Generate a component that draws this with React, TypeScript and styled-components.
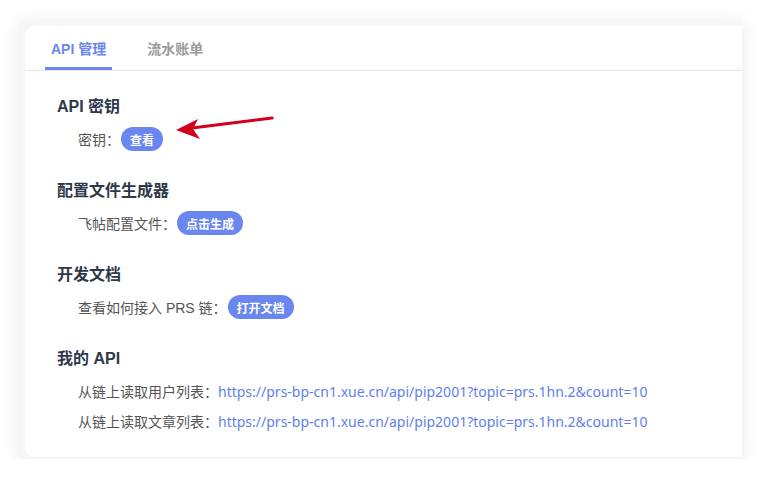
import React from "react";
import styled, { createGlobalStyle } from "styled-components";

const Global = createGlobalStyle`
  html, body { margin: 0; padding: 0; background: #ffffff; }
  body {
    font-family: "Liberation Sans", "Noto Sans CJK SC", sans-serif;
    -webkit-font-smoothing: antialiased;
  }
`;

const Frame = styled.div`
  position: relative;
  margin: 20px 0 0 20px;
  width: 717px;
  height: 431px;
  padding: 6px 0 2px 5px;
  background: #f6f6f6;
  box-shadow: 0 2px 18px rgba(0, 0, 0, 0.09);
`;

const Card = styled.div`
  height: 100%;
  background: #ffffff;
  border-radius: 10px 0 0 10px;
  display: flex;
  flex-direction: column;
`;

const TabBar = styled.div`
  display: flex;
  gap: 29px;
  padding: 0 0 0 20px;
  height: 44px;
  border-bottom: 1px solid #e6e6e6;
`;

const Tab = styled.div<{ $active?: boolean }>`
  display: flex;
  align-items: center;
  padding: 0 6px;
  height: 44px;
  box-sizing: border-box;
  padding-top: 3px;
  font-size: 14px;
  font-weight: 700;
  color: ${(p) => (p.$active ? "#6a86ef" : "#9a9a9a")};
  border-bottom: 3px solid ${(p) => (p.$active ? "#6a86ef" : "transparent")};
`;

const Body = styled.div`
  padding: 25px 0 0 32px;
  display: flex;
  flex-direction: column;
  gap: 29px;
`;

const Section = styled.section`
  display: flex;
  flex-direction: column;
`;

const Heading = styled.h2`
  margin: 0;
  font-size: 16px;
  line-height: 22px;
  font-weight: 700;
  color: #2e3849;
`;

const Rows = styled.div`
  margin-top: 9px;
  padding-left: 21px;
  display: flex;
  flex-direction: column;
  gap: 6px;
`;

const Row = styled.div`
  display: flex;
  align-items: center;
  height: 24px;
  font-size: 14px;
  color: #555555;
  white-space: nowrap;
`;

const Pill = styled.button`
  margin-left: 1px;
  height: 24px;
  padding: 0 9px;
  border: none;
  border-radius: 12px;
  background: #6a86ef;
  color: #ffffff;
  font-family: inherit;
  font-size: 12px;
  font-weight: 700;
  cursor: pointer;
`;

const Link = styled.a`
  color: #5f7ff0;
  font-family: "Noto Sans", "Noto Sans CJK SC", sans-serif;
  text-decoration: none;
`;

const Arrow = styled.svg`
  position: absolute;
  left: 150px;
  top: 88px;
`;

const url = "https://prs-bp-cn1.xue.cn/api/pip2001?topic=prs.1hn.2&count=10";

export default function App() {
  return (
    <>
      <Global />
      <Frame>
        <Card>
          <TabBar>
            <Tab $active>API 管理</Tab>
            <Tab>流水账单</Tab>
          </TabBar>
          <Body>
            <Section>
              <Heading>API 密钥</Heading>
              <Rows>
                <Row>
                  密钥：<Pill>查看</Pill>
                </Row>
              </Rows>
            </Section>
            <Section>
              <Heading>配置文件生成器</Heading>
              <Rows>
                <Row>
                  飞帖配置文件：<Pill>点击生成</Pill>
                </Row>
              </Rows>
            </Section>
            <Section>
              <Heading>开发文档</Heading>
              <Rows>
                <Row>
                  查看如何接入 PRS 链：<Pill>打开文档</Pill>
                </Row>
              </Rows>
            </Section>
            <Section>
              <Heading>我的 API</Heading>
              <Rows>
                <Row>
                  从链上读取用户列表：<Link href="#">{url}</Link>
                </Row>
                <Row>
                  从链上读取文章列表：<Link href="#">{url}</Link>
                </Row>
              </Rows>
            </Section>
          </Body>
        </Card>
        <Arrow width="110" height="32" viewBox="0 0 110 32">
          <line x1="102" y1="10" x2="22" y2="20" stroke="#d0021b" strokeWidth="3.2" strokeLinecap="round" />
          <polygon points="6,22 28,11 23,21 30,31" fill="#d0021b" />
        </Arrow>
      </Frame>
    </>
  );
}
